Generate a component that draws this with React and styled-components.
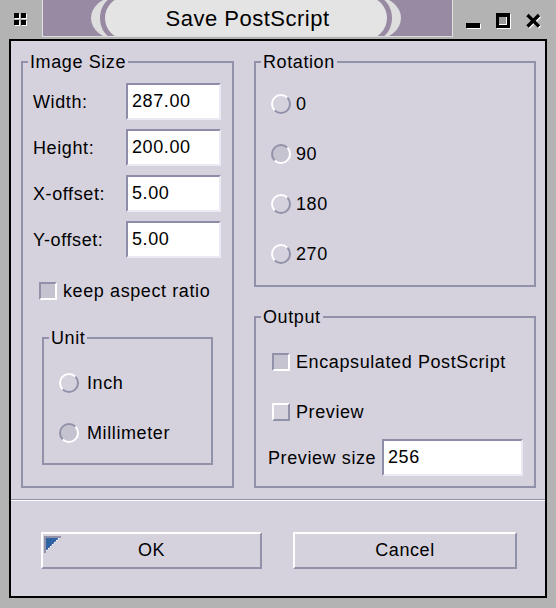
import React from "react";
import styled, { createGlobalStyle } from "styled-components";

const C = {
  frame: "#b3b3b3",
  purple: "#988aa2",
  bg: "#d5d2de",
  edge: "#9291aa",
  light: "#ffffff",
  sunk: "#c6c3d0",
  pill: "#e4e4e4",
};

const GlobalStyle = createGlobalStyle`
  html, body { margin: 0; padding: 0; }
  body { background: ${C.frame}; font-family: "Liberation Sans", Arial, sans-serif; }
  * { box-sizing: border-box; }
`;

const Window = styled.div`
  width: 556px;
  height: 608px;
  display: flex;
  flex-direction: column;
  background: ${C.frame};
  font-family: "Liberation Sans", Arial, sans-serif;
  font-size: 18px;
  letter-spacing: 0.6px;
  color: #000;
  overflow: hidden;
`;

const TitleBar = styled.div`
  height: 39px;
  display: flex;
  flex-shrink: 0;
`;

const MenuBox = styled.div`
  width: 43px;
  height: 37px;
  display: flex;
  align-items: center;
  justify-content: center;
  padding-top: 2px;
  border-right: 1px solid #e2e2e2;
`;

const TitleCenter = styled.div`
  flex: 1;
  height: 37px;
  background: ${C.purple};
  overflow: hidden;
  display: flex;
  align-items: center;
  justify-content: center;
  border-bottom: 1px solid #dcdcdc;
`;

const Ring = styled.div`
  height: 42px;
  flex-shrink: 0;
  display: flex;
  padding: 0 5px;
  border-style: solid;
  border-color: #dedede;
  border-width: 0 9px;
  border-radius: 25px / 21px;
  margin-left: -4px;
`;

const Pill = styled.div`
  width: 282px;
  height: 42px;
  border-radius: 20px / 21px;
  background: ${C.pill};
  display: flex;
  align-items: center;
  justify-content: center;
`;

const TitleText = styled.span`
  font-size: 22px;
  letter-spacing: 0.5px;
  line-height: 24px;
  padding: 1px 0 0 4px;
`;

const TitleButtons = styled.div`
  width: 104px;
  height: 37px;
  display: flex;
  align-items: flex-start;
  gap: 14px;
  padding: 13px 0 0 13px;
  border-left: 1px solid #e2e2e2;
`;

const Frame = styled.div`
  flex: 1;
  display: flex;
  padding: 0 9px 10px 9px;
`;

const Body = styled.div`
  flex: 1;
  display: flex;
  flex-direction: column;
  border: 2px solid #000;
  background: ${C.bg};
`;

const Main = styled.div`
  flex: 1;
  display: flex;
  gap: 20px;
  padding: 11px 9px 11px 10px;
`;

const Column = styled.div`
  flex: 1;
  display: flex;
  flex-direction: column;
  gap: 20px;
`;

const Group = styled.fieldset`
  margin: ${(p) => p.$margin || "0"};
  padding: 0;
  min-width: 0;
  border: 2px solid ${C.edge};
  width: ${(p) => p.$width || "auto"};
  flex: ${(p) => p.$flex || "none"};
  display: flex;
  flex-direction: column;
`;

const Legend = styled.legend`
  margin-left: 5px;
  padding: 0 2px;
  height: 20px;
  line-height: 20px;
`;

const GroupContent = styled.div`
  display: flex;
  flex-direction: column;
  gap: ${(p) => p.$gap || "0"};
  padding: ${(p) => p.$pad};
`;

const FieldGrid = styled.div`
  display: grid;
  grid-template-columns: ${(p) => p.$cols};
  grid-auto-rows: 37px;
  row-gap: 9px;
  align-items: center;
`;

const Label = styled.span`
  white-space: nowrap;
  line-height: 20px;
`;

const TextBox = styled.input`
  width: 100%;
  height: 37px;
  margin: 0;
  padding: 0 4px;
  border-style: solid;
  border-width: 2px;
  border-color: #8e8ca8 #ebeaf4 #ebeaf4 #8e8ca8;
  background: #fff;
  font: inherit;
  letter-spacing: inherit;
  color: #000;
  outline: none;
`;

const OptionRow = styled.label`
  display: flex;
  align-items: center;
  gap: ${(p) => p.$gap || "6px"};
  height: 20px;
  line-height: 20px;
  margin: ${(p) => p.$margin || "0"};
  white-space: nowrap;
`;

const bevel = (on) =>
  on ? `${C.edge} #fff #fff ${C.edge}` : `#fff ${C.edge} ${C.edge} #fff`;

const Check = styled.span`
  width: 18px;
  height: 18px;
  flex-shrink: 0;
  border: 2px solid;
  border-color: ${(p) => bevel(p.$on)};
  background: ${(p) => (p.$on ? C.sunk : C.bg)};
`;

const Radio = styled.span`
  width: 20px;
  height: 20px;
  flex-shrink: 0;
  border-radius: 50%;
  border: 2px solid;
  border-color: ${(p) => bevel(p.$on)};
  background: ${(p) => (p.$on ? C.sunk : C.bg)};
`;

const Separator = styled.div`
  height: 2px;
  border-top: 1px solid ${C.edge};
  border-bottom: 1px solid #fff;
`;

const ButtonRow = styled.div`
  height: 95px;
  display: flex;
  align-items: flex-start;
  gap: 31px;
  padding: 31px 0 0 30px;
`;

const Button = styled.button`
  width: ${(p) => p.$width};
  height: 37px;
  position: relative;
  margin: 0;
  padding: 0;
  border: 2px solid;
  border-color: #fff ${C.edge} ${C.edge} #fff;
  background: ${C.bg};
  font: inherit;
  letter-spacing: inherit;
  color: #000;
  display: flex;
  align-items: center;
  justify-content: center;
`;

const DefaultMark = styled.svg`
  position: absolute;
  left: 1px;
  top: 2px;
`;

const MenuIcon = () => (
  <svg width="14" height="14" viewBox="0 0 14 14">
    {[
      [0, 0],
      [7, 0],
      [0, 7],
      [7, 7],
    ].map(([x, y]) => (
      <g key={`${x}-${y}`}>
        <rect x={x + 1} y={y + 1} width="5" height="5" fill="#fff" />
        <rect x={x} y={y} width="5" height="5" fill="#000" />
      </g>
    ))}
  </svg>
);

const MinIcon = () => (
  <svg width="16" height="17" viewBox="0 0 16 17">
    <rect x="1" y="11" width="14" height="5" fill="#fff" />
    <rect x="0" y="10" width="14" height="5" fill="#000" />
  </svg>
);

const MaxIcon = () => (
  <svg width="16" height="17" viewBox="0 0 16 17">
    <rect x="1" y="1" width="14" height="15" fill="#fff" />
    <rect x="0" y="0" width="14" height="15" fill="#000" />
    <rect x="3" y="4" width="8" height="8" fill="#fff" />
    <rect x="3" y="4" width="7" height="7" fill="#9c9c9c" />
  </svg>
);

const CloseIcon = () => (
  <svg width="16" height="17" viewBox="0 0 16 17">
    <path d="M2.5 3 L14 14.5 M14 3 L2.5 14.5" stroke="#fff" strokeWidth="3.4" />
    <path d="M1.5 2 L13 13.5 M13 2 L1.5 13.5" stroke="#000" strokeWidth="3.4" />
  </svg>
);

const DefaultIndicator = () => (
  <DefaultMark width="17" height="17" viewBox="0 0 17 17">
    <rect x="0" y="0" width="17" height="2" fill={C.edge} />
    <rect x="0" y="0" width="2" height="17" fill={C.edge} />
    <polygon points="2,2 15,2 2,15" fill="#2f63a3" />
    {Array.from({ length: 7 }).map((_, i) => (
      <rect key={i} x={14 - i * 2} y={2 + i * 2} width="1" height="1" fill="#fff" />
    ))}
  </DefaultMark>
);

export default function App() {
  return (
    <>
      <GlobalStyle />
      <Window>
        <TitleBar>
          <MenuBox>
            <MenuIcon />
          </MenuBox>
          <TitleCenter>
            <Ring>
              <Pill>
                <TitleText>Save PostScript</TitleText>
              </Pill>
            </Ring>
          </TitleCenter>
          <TitleButtons>
            <MinIcon />
            <MaxIcon />
            <CloseIcon />
          </TitleButtons>
        </TitleBar>
        <Frame>
          <Body>
            <Main>
              <Group $width="213px">
                <Legend>Image Size</Legend>
                <GroupContent $pad="11px 11px 0 10px">
                  <FieldGrid $cols="93px 95px">
                    <Label>Width:</Label>
                    <TextBox defaultValue="287.00" />
                    <Label>Height:</Label>
                    <TextBox defaultValue="200.00" />
                    <Label>X-offset:</Label>
                    <TextBox defaultValue="5.00" />
                    <Label>Y-offset:</Label>
                    <TextBox defaultValue="5.00" />
                  </FieldGrid>
                  <OptionRow $margin="23px 0 0 6px">
                    <Check $on />
                    keep aspect ratio
                  </OptionRow>
                  <Group $margin="27px 8px 0 9px">
                    <Legend>Unit</Legend>
                    <GroupContent $pad="25px 0 20px 15px" $gap="30px">
                      <OptionRow $gap="8px">
                        <Radio />
                        Inch
                      </OptionRow>
                      <OptionRow $gap="8px">
                        <Radio $on />
                        Millimeter
                      </OptionRow>
                    </GroupContent>
                  </Group>
                </GroupContent>
              </Group>
              <Column>
                <Group>
                  <Legend>Rotation</Legend>
                  <GroupContent $pad="22px 0 21px 15px" $gap="30px">
                    <OptionRow $gap="5px">
                      <Radio />0
                    </OptionRow>
                    <OptionRow $gap="5px">
                      <Radio $on />
                      90
                    </OptionRow>
                    <OptionRow $gap="5px">
                      <Radio />
                      180
                    </OptionRow>
                    <OptionRow $gap="5px">
                      <Radio />
                      270
                    </OptionRow>
                  </GroupContent>
                </Group>
                <Group $flex="1">
                  <Legend>Output</Legend>
                  <GroupContent $pad="25px 11px 0 12px" $gap="30px">
                    <OptionRow $margin="0 0 0 4px">
                      <Check $on />
                      Encapsulated PostScript
                    </OptionRow>
                    <OptionRow $margin="0 0 0 4px">
                      <Check />
                      Preview
                    </OptionRow>
                  </GroupContent>
                  <GroupContent $pad="17px 11px 0 12px">
                    <FieldGrid $cols="114px 1fr">
                      <Label>Preview size</Label>
                      <TextBox defaultValue="256" />
                    </FieldGrid>
                  </GroupContent>
                </Group>
              </Column>
            </Main>
            <Separator />
            <ButtonRow>
              <Button $width="221px">
                <DefaultIndicator />
                OK
              </Button>
              <Button $width="224px">Cancel</Button>
            </ButtonRow>
          </Body>
        </Frame>
      </Window>
    </>
  );
}
